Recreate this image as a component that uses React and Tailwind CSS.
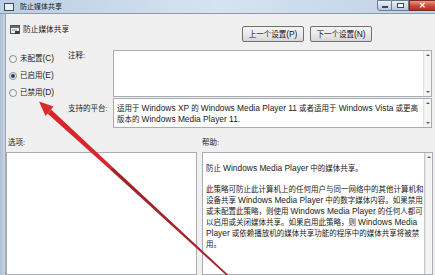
import React from 'react';

// mixed CJK / Latin runs: Latin text in the reference is a touch larger than the CJK glyphs
function T({ children }) {
    const parts = children.split(/([\x21-\x7e][\x20-\x7e]*[\x21-\x7e]|[\x21-\x7e])/);
    return parts.map((p, i) =>
        /[\x21-\x7e]/.test(p) ? <span key={i} className="text-[8.4px]">{p}</span> : <React.Fragment key={i}>{p}</React.Fragment>
    );
}

function Radio({ label, checked }) {
    return (
        <div className="flex h-[11px] items-center gap-[3px] pl-[3px]">
            <span className="flex h-[8px] w-[8px] items-center justify-center rounded-full border border-[#8e8f8f] bg-gradient-to-br from-[#e6e6e6] to-white">
                {checked && <span className="h-[4px] w-[4px] rounded-full bg-[#1f3f78]" />}
            </span>
            <span className="text-[#1a1a1a]"><T>{label}</T></span>
        </div>
    );
}

function ScrollBar({ down = true }) {
    return (
        <div className="flex w-[8px] flex-col items-center justify-between border-l border-[#e3e3e3] bg-[#f4f4f4] py-[3px]">
            <span className="h-0 w-0 border-x-[2px] border-b-[2px] border-x-transparent border-b-[#606060]" />
            {down && <span className="h-0 w-0 border-x-[2px] border-t-[2px] border-x-transparent border-t-[#606060]" />}
        </div>
    );
}

function Button({ children }) {
    return (
        <button className="flex h-[16px] w-[62px] items-center justify-center rounded-[2px] border border-[#707070] bg-gradient-to-b from-[#f3f3f3] via-[#ebebeb] to-[#d6d6d6] text-[#111]">
            <T>{children}</T>
        </button>
    );
}

const help = [
    '防止 Windows Media Player 中的媒体共享。',
    '',
    '此策略可防止此计算机上的任何用户与同一网络中的其他计算机和',
    '设备共享 Windows Media Player 中的数字媒体内容。如果禁用',
    '或未配置此策略，则使用 Windows Media Player 的任何人都可',
    '以启用或关闭媒体共享。如果启用此策略，则 Windows Media',
    'Player 或依赖播放机的媒体共享功能的程序中的媒体共享将被禁',
    '用。',
];

export default function App() {
    return (
        <div
            className="relative h-[275px] w-[435px] overflow-hidden bg-[#f0f0f0] text-[7.5px] leading-[11px] text-[#1a1a1a]"
            style={{ fontFamily: '"Liberation Sans", "Noto Sans CJK SC", sans-serif' }}
        >
            {/* Title bar */}
            <div className="flex h-[14px] items-start border-b border-[#8d9bad] bg-gradient-to-r from-[#bccee3] via-[#d6e3f1] to-[#bfd2e6]">
                <div className="flex h-[13px] items-center gap-[6px] pl-[4px]">
                    <span className="h-[8px] w-[10px] border border-[#3d4b5c] bg-[#e9eef4]" />
                    <span className="text-[7px] text-[#111]">防止媒体共享</span>
                </div>
                <div className="ml-auto flex h-[11px]">
                    <div className="flex w-[15px] items-end justify-center rounded-bl-[3px] border border-[#6b7c92] bg-gradient-to-b from-[#e9f0f7] to-[#b9c9db] pb-[2px]">
                        <span className="h-[2px] w-[6px] border border-[#3c4656] bg-white" />
                    </div>
                    <div className="flex w-[17px] items-center justify-center border-y border-r border-[#6b7c92] bg-gradient-to-b from-[#e9f0f7] to-[#b9c9db]">
                        <span className="h-[5px] w-[7px] border border-[#3c4656] bg-white" />
                    </div>
                    <div className="flex w-[26px] items-center justify-center border-y border-l border-[#7a2b22] bg-gradient-to-b from-[#e49a8c] via-[#cf4b3c] to-[#b62f20] text-[8px] font-bold leading-none text-white">
                        ✕
                    </div>
                </div>
            </div>

            <div className="flex h-[261px]">
                {/* Window frame edge */}
                <div className="w-[6px] border-r border-[#9aa7b6] bg-gradient-to-r from-[#aebfd2] to-[#c7d6e6]" />

                <div className="flex flex-1 flex-col">
                    {/* Header */}
                    <div className="flex h-[36px] items-start">
                        <div className="mt-[10px] flex items-center gap-[3px] pl-[4px]">
                            <svg width="10" height="9" viewBox="0 0 10 9">
                                <rect x="0.5" y="0.5" width="9" height="8" fill="#f4f4f4" stroke="#555" />
                                <rect x="1" y="1" width="8" height="2" fill="#6a6a6a" />
                                <rect x="2" y="4.5" width="5" height="1" fill="#888" />
                                <rect x="5" y="6" width="4" height="3" fill="#3a3a3a" />
                            </svg>
                            <span className="text-[7.7px]">防止媒体共享</span>
                        </div>
                        <div className="ml-auto mr-[63px] mt-[12px] flex gap-[6px]">
                            <Button>上一个设置(P)</Button>
                            <Button>下一个设置(N)</Button>
                        </div>
                    </div>

                    {/* Comment row */}
                    <div className="flex h-[48px]">
                        <div className="flex w-[62px] flex-col gap-[6px] pt-[3px]">
                            <Radio label="未配置(C)" />
                            <Radio label="已启用(E)" checked />
                            <Radio label="已禁用(D)" />
                        </div>
                        <div className="w-[45px]">注释:</div>
                        <div className="flex h-[47px] w-[319px] border border-[#a9acb3] bg-white">
                            <div className="flex-1" />
                            <ScrollBar />
                        </div>
                    </div>

                    {/* Supported platform */}
                    <div className="flex h-[30px]">
                        <div className="w-[62px]" />
                        <div className="w-[45px] pt-[5px]">支持的平台:</div>
                        <div className="flex h-[30px] w-[319px] border border-[#a9acb3] bg-white">
                            <div className="flex-1 whitespace-nowrap pl-[3px] pt-[4px]">
                                <div><T>适用于 Windows XP 的 Windows Media Player 11 或者适用于 Windows Vista 或更高</T></div>
                                <div><T>版本的 Windows Media Player 11.</T></div>
                            </div>
                            <ScrollBar />
                        </div>
                    </div>

                    {/* Section labels */}
                    <div className="flex h-[24px] items-end pb-[4px]">
                        <div className="w-[196px] pl-[2px]">选项:</div>
                        <div>帮助:</div>
                    </div>

                    {/* Options / Help panes */}
                    <div className="flex flex-1 gap-[5px]">
                        <div className="w-[191px] border border-[#a9acb3] bg-white" />
                        <div className="flex w-[231px] border border-[#a9acb3] bg-white">
                            <div className="flex-1 whitespace-nowrap border-r border-[#c8c8c8] pl-[3px] pt-[10px]">
                                {help.map((line, i) =>
                                    line ? (
                                        <div key={i}><T>{line}</T></div>
                                    ) : (
                                        <div key={i} className="h-[10px]" />
                                    )
                                )}
                            </div>
                            <ScrollBar down={false} />
                        </div>
                    </div>
                </div>
            </div>

            {/* Red annotation arrow */}
            <svg className="pointer-events-none absolute inset-0" width="435" height="275" viewBox="0 0 435 275">
                <polygon points="47.4,113.4 51.1,109.6 112.5,167 110,169.5" fill="#d9262a" />
                <polygon points="110,169.5 112.5,167 230.6,277 229.2,278" fill="#a02528" />
                <polygon points="39,101.5 53.5,106.5 45.5,116" fill="#dc2a2c" />
            </svg>
        </div>
    );
}
